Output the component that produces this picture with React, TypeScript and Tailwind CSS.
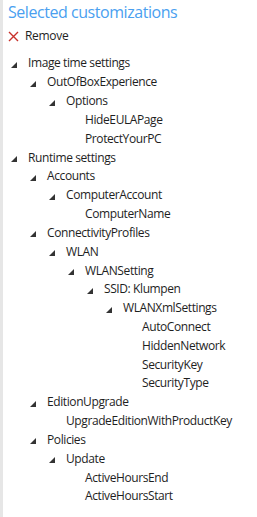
import { Fragment } from "react";

type Node = { label: string; children?: Node[] };

const tree: Node[] = [
  {
    label: "Image time settings",
    children: [
      {
        label: "OutOfBoxExperience",
        children: [
          {
            label: "Options",
            children: [{ label: "HideEULAPage" }, { label: "ProtectYourPC" }],
          },
        ],
      },
    ],
  },
  {
    label: "Runtime settings",
    children: [
      {
        label: "Accounts",
        children: [
          { label: "ComputerAccount", children: [{ label: "ComputerName" }] },
        ],
      },
      {
        label: "ConnectivityProfiles",
        children: [
          {
            label: "WLAN",
            children: [
              {
                label: "WLANSetting",
                children: [
                  {
                    label: "SSID: Klumpen",
                    children: [
                      {
                        label: "WLANXmlSettings",
                        children: [
                          { label: "AutoConnect" },
                          { label: "HiddenNetwork" },
                          { label: "SecurityKey" },
                          { label: "SecurityType" },
                        ],
                      },
                    ],
                  },
                ],
              },
            ],
          },
        ],
      },
      {
        label: "EditionUpgrade",
        children: [{ label: "UpgradeEditionWithProductKey" }],
      },
      {
        label: "Policies",
        children: [
          {
            label: "Update",
            children: [{ label: "ActiveHoursEnd" }, { label: "ActiveHoursStart" }],
          },
        ],
      },
    ],
  },
];

const indents = [
  "pl-[6px]",
  "pl-[25px]",
  "pl-[44px]",
  "pl-[63px]",
  "pl-[82px]",
  "pl-[101px]",
  "pl-[120px]",
];

const Expander = () => (
  <svg width="6" height="6" viewBox="0 0 6 6" className="mt-[3px] shrink-0 text-[#333]">
    <polygon points="6,0 6,6 0,6" fill="currentColor" />
  </svg>
);

const Row = ({ node, level }: { node: Node; level: number }) => {
  const hasChildren = !!node.children?.length;
  return (
    <Fragment>
      <div className={`flex h-[18.83px] items-center ${indents[level]}`}>
        <div className="flex w-[19px] shrink-0 justify-start pl-[2px]">
          {hasChildren && <Expander />}
        </div>
        <span className="whitespace-nowrap">{node.label}</span>
      </div>
      {node.children?.map((child) => (
        <Row key={child.label} node={child} level={level + 1} />
      ))}
    </Fragment>
  );
};

export default function App() {
  return (
    <div
      className="flex h-[517px] w-[257px] bg-white text-[#1e1e1e]"
      style={{ fontFamily: '"Open Sans", "Noto Sans", sans-serif' }}
    >
      <div className="w-[3px] shrink-0 bg-[#e6e6e6]" />
      <div className="flex-1">
        <div className="pl-[5px] pt-[1px] text-[16px] leading-[22px] tracking-[-0.45px] text-[#4a9ff0]">
          Selected customizations
        </div>
        <div className="mt-[3px] flex h-[20px] items-center gap-[6px] pl-[5px] text-[12px] tracking-[-0.3px]">
          <svg width="11" height="11" viewBox="0 0 11 11" className="shrink-0">
            <path d="M1 1 L10 10 M10 1 L1 10" stroke="#c8312b" strokeWidth="1.4" />
          </svg>
          <span>Remove</span>
        </div>
        <div className="mt-[8px] text-[12px] tracking-[-0.4px]">
          {tree.map((n) => (
            <Row key={n.label} node={n} level={0} />
          ))}
        </div>
      </div>
    </div>
  );
}
